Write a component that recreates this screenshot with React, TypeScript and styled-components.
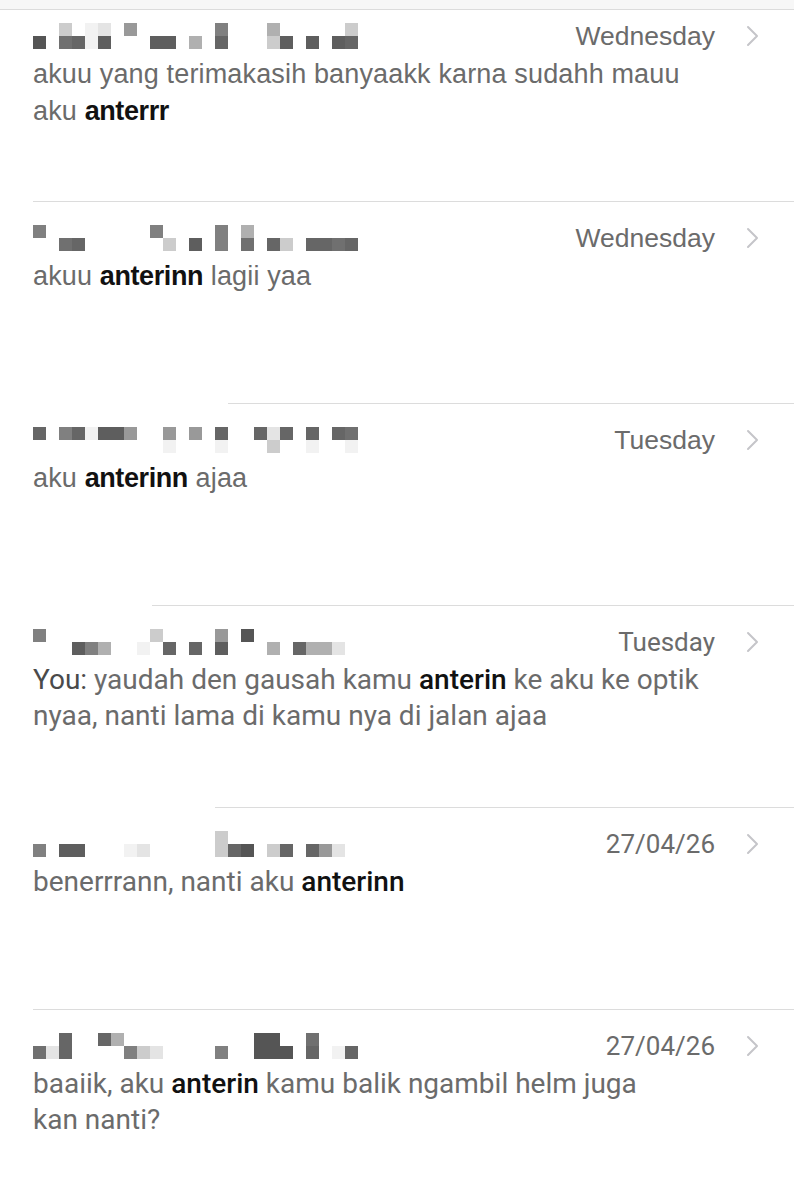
import React, {FC, Fragment} from "react";
import styled, {createGlobalStyle} from "styled-components";

type Part = {text: string; hit?: boolean; you?: boolean};

type Result = {
  name: [string, string];
  date: string;
  lines: Part[][];
  narrow?: boolean;
  inset?: number;
};

const results: Result[] = [
  {
    name: ["..8.09.6......5...7.....8", "1.4302...22.7.3...82.2.23"],
    date: "Wednesday",
    lines: [
      [{text: "akuu yang terimakasih banyaakk karna sudahh mauu"}],
      [{text: "aku "}, {text: "anterrr", hit: true}],
    ],
    inset: 33,
  },
  {
    name: ["5........5....5.7........", "..43......8.2.5.4.38.3343"],
    date: "Wednesday",
    lines: [[{text: "akuu "}, {text: "anterinn", hit: true}, {text: " lagii yaa"}]],
    inset: 228,
  },
  {
    name: ["3.530226..6.6.3..393.3.34", "..........0...0...8..0..0"],
    date: "Tuesday",
    lines: [[{text: "aku "}, {text: "anterinn", hit: true}, {text: " ajaa"}]],
    inset: 152,
  },
  {
    name: ["5........8....6.1........", "...257..0.3.3.2...7.3779."],
    date: "Tuesday",
    lines: [
      [{text: "You: ", you: true}, {text: "yaudah den gausah kamu "}, {text: "anterin", hit: true}, {text: " ke aku ke optik"}],
      [{text: "nyaa, nanti lama di kamu nya di jalan ajaa"}],
    ],
    narrow: true,
    inset: 215,
  },
  {
    name: ["..............8..........", "5.22...09.....831.83.369."],
    date: "27/04/26",
    lines: [[{text: "benerrrann, nanti aku "}, {text: "anterinn", hit: true}]],
    narrow: true,
    inset: 33,
  },
  {
    name: ["..3..37..........11..4...", "493....589....5..111.3.03"],
    date: "27/04/26",
    lines: [
      [{text: "baaiik, aku "}, {text: "anterin", hit: true}, {text: " kamu balik ngambil helm juga"}],
      [{text: "kan nanti?"}],
    ],
    narrow: true,
  },
];

const shades: Record<string, string> = {
  "1": "#555555",
  "2": "#5e5e5e",
  "3": "#666666",
  "4": "#707070",
  "5": "#808080",
  "6": "#999999",
  "7": "#b0b0b0",
  "8": "#cccccc",
  "9": "#e4e4e4",
  "0": "#f2f2f2",
};

const Chevron: FC = () => <svg width="14" height="22" viewBox="0 0 14 22">
  <polyline points="2,2 11,11 2,20" fill="none" stroke="#c5c5c9" strokeWidth="2" strokeLinecap="round" strokeLinejoin="round"/>
</svg>;

const App: FC = () => <>
  <GlobalStyle/>
  <Page>
    <TopBar/>
    {results.map((r, i) => <Fragment key={i}>
      <Row $first={i === 0}>
        <Header>
          <Mosaic aria-label="hidden name">
            {(r.name[0] + r.name[1]).split("").map((c, j) => <Cell key={j} $shade={shades[c]}/>)}
          </Mosaic>
          <Meta>
            <DateLabel $narrow={r.narrow}>{r.date}</DateLabel>
            <Chevron/>
          </Meta>
        </Header>
        <Message $narrow={r.narrow}>
          {r.lines.map((line, k) => <Line key={k}>
            {line.map((p, m) => p.hit
              ? <Hit key={m} $narrow={r.narrow}>{p.text}</Hit>
              : p.you ? <You key={m}>{p.text}</You> : <span key={m}>{p.text}</span>)}
          </Line>)}
        </Message>
      </Row>
      {r.inset !== undefined && <Separator $inset={r.inset}/>}
    </Fragment>)}
  </Page>
</>;
export default App;

const GlobalStyle = createGlobalStyle`
body {
  margin: 0;
  background: #ffffff;
  font-family: "Liberation Sans", Arial, sans-serif;
}
`;

const Page = styled.div`
width: 794px;
height: 1200px;
overflow: hidden;
background: #ffffff;
`;

const TopBar = styled.div`
height: 9px;
background: #f7f7f7;
border-bottom: 1px solid #dcdcdc;
`;

const Row = styled.div<{$first?: boolean}>`
box-sizing: border-box;
height: ${p => p.$first ? 191 : 201}px;
padding: ${p => p.$first ? 13 : 23}px 34px 0 33px;
`;

const Separator = styled.div<{$inset: number}>`
height: 1px;
margin-left: ${p => p.$inset}px;
background: #dcdcdc;
`;

const Header = styled.div`
display: flex;
align-items: center;
justify-content: space-between;
height: 26px;
`;

const Mosaic = styled.div`
display: grid;
grid-template-columns: repeat(25, 13px);
grid-template-rows: 13px 13px;
`;

const Cell = styled.div<{$shade?: string}>`
background: ${p => p.$shade || "transparent"};
`;

const Meta = styled.div`
display: flex;
align-items: center;
gap: 31px;
`;

const DateLabel = styled.span<{$narrow?: boolean}>`
font-family: ${p => p.$narrow ? `Roboto, "Liberation Sans", sans-serif` : `"Liberation Sans", sans-serif`};
font-size: ${p => p.$narrow ? 26 : 26.5}px;
line-height: 26px;
color: #6b6b6b;
`;

const Message = styled.div<{$narrow?: boolean}>`
margin-top: 7px;
font-family: ${p => p.$narrow ? `Roboto, "Liberation Sans", sans-serif` : `"Liberation Sans", sans-serif`};
font-size: ${p => p.$narrow ? 28 : 27}px;
letter-spacing: ${p => p.$narrow ? 0 : 0.15}px;
line-height: ${p => p.$narrow ? 36 : 37}px;
color: #6b6b6b;
`;

const Line = styled.div`
white-space: nowrap;
`;

const Hit = styled.span<{$narrow?: boolean}>`
color: #111111;
font-weight: ${p => p.$narrow ? 500 : 700};
letter-spacing: ${p => p.$narrow ? 0 : -0.4}px;
`;

const You = styled.span`
color: #4a4a4a;
`;
